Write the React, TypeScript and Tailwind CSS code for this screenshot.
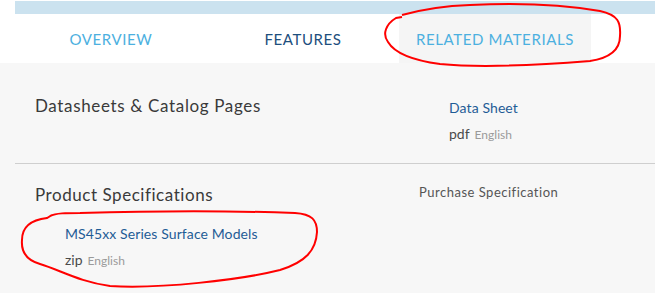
import React from "react";

const tabs = [
  { label: "OVERVIEW", active: false, color: "text-[#4cb0e0]" },
  { label: "FEATURES", active: false, color: "text-[#1d4f7e]" },
  { label: "RELATED MATERIALS", active: true, color: "text-[#4cb0e0]" },
];

function FileLink({ title, ext }: { title: string; ext: string }) {
  return (
    <div>
      <div className="text-[14px] leading-[20px] tracking-[0.1px] text-[#1f5c96]">{title}</div>
      <div className="mt-[5px] flex items-baseline gap-[5px]">
        <span className="text-[14px] text-[#4a4a4a]">{ext}</span>
        <span className="text-[12px] text-[#9a9a9a]">English</span>
      </div>
    </div>
  );
}

export default function App() {
  return (
    <div
      className="relative h-[293px] w-[655px] overflow-hidden bg-[#f7f7f7]"
      style={{ fontFamily: "Lato, 'Open Sans', sans-serif" }}
    >
      <div className="bg-white pl-[15px] pt-[1px]">
        <div className="h-[13px] bg-[#cbe2ef]" />
        <div className="flex h-[49px]">
          {tabs.map((t) => (
            <div
              key={t.label}
              className={`flex w-[192px] items-center justify-center pt-[2px] text-[15px] tracking-[0.6px] ${t.color} ${
                t.active ? "bg-[#f5f5f5]" : ""
              }`}
            >
              {t.label}
            </div>
          ))}
        </div>
      </div>

      <div className="flex h-[100px] pl-[35px] pt-[33px]">
        <div className="w-[414px] text-[17px] leading-[20px] tracking-[0.65px] text-[#3a3a3a]">
          Datasheets &amp; Catalog Pages
        </div>
        <div className="pt-[2px]">
          <FileLink title="Data Sheet" ext="pdf" />
        </div>
      </div>
      <div className="ml-[15px] h-px bg-[#cfcfcf]" />

      <div className="flex pl-[35px] pt-[21px]">
        <div className="w-[384px]">
          <div className="text-[17px] leading-[20px] tracking-[0.55px] text-[#3a3a3a]">Product Specifications</div>
          <div className="ml-[30px] mt-[19px]">
            <FileLink title="MS45xx Series Surface Models" ext="zip" />
          </div>
        </div>
        <div className="-mt-[2px] text-[13px] leading-[18px] tracking-[0.5px] text-[#555]">Purchase Specification</div>
      </div>

      <svg className="pointer-events-none absolute left-0 top-0" width="655" height="293" fill="none">
        <path
          d="M402 17 L396 18 C386 24 382 34 388 42 C394 52 410 60 440 64 C480 68 540 65 590 61 C610 58 620 50 620 36 C621 22 618 15 600 11 C560 4 510 3 470 5 C440 6 420 10 402 15"
          stroke="#ff0000"
          strokeWidth="2"
        />
        <path
          d="M52 215 L47 218 C30 220 22 228 22 240 C21 252 26 260 40 264 C60 270 80 282 110 286 C160 289 240 280 280 270 C306 262 316 250 317 232 C317 220 312 214 295 213 C240 211 150 211 80 213 C66 213 56 213 50 216"
          stroke="#ff0000"
          strokeWidth="2"
        />
      </svg>
    </div>
  );
}
